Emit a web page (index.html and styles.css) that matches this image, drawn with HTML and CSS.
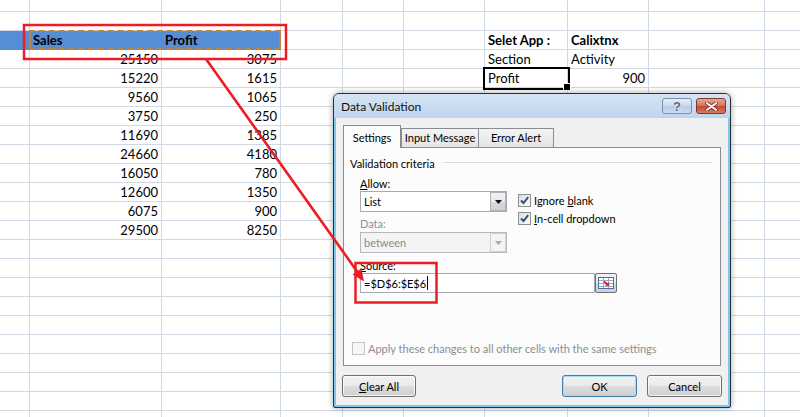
FILE: index.html
```html
<!DOCTYPE html>
<html>
<head>
<meta charset="utf-8">
<title>Data Validation</title>
<link rel="stylesheet" href="styles.css">
</head>
<body>
<div class="grid">
  <div></div><div></div><div></div><div></div><div></div><div></div><div></div><div></div><div></div><div></div>
  <div></div><div></div><div></div><div></div><div></div><div></div><div></div><div></div><div></div><div></div>
  <div class="hd"></div><div class="hd">Sales</div><div class="hd">Profit</div><div></div><div></div><div></div><div class="b">Selet App :</div><div class="b">Calixtnx</div><div></div><div></div>
  <div></div><div class="n">25150</div><div class="n">3075</div><div></div><div></div><div></div><div>Section</div><div>Activity</div><div></div><div></div>
  <div></div><div class="n">15220</div><div class="n">1615</div><div></div><div></div><div></div><div class="sel">Profit</div><div class="n">900</div><div></div><div></div>
  <div></div><div class="n">9560</div><div class="n">1065</div><div></div><div></div><div></div><div></div><div></div><div></div><div></div>
  <div></div><div class="n">3750</div><div class="n">250</div><div></div><div></div><div></div><div></div><div></div><div></div><div></div>
  <div></div><div class="n">11690</div><div class="n">1385</div><div></div><div></div><div></div><div></div><div></div><div></div><div></div>
  <div></div><div class="n">24660</div><div class="n">4180</div><div></div><div></div><div></div><div></div><div></div><div></div><div></div>
  <div></div><div class="n">16050</div><div class="n">780</div><div></div><div></div><div></div><div></div><div></div><div></div><div></div>
  <div></div><div class="n">12600</div><div class="n">1350</div><div></div><div></div><div></div><div></div><div></div><div></div><div></div>
  <div></div><div class="n">6075</div><div class="n">900</div><div></div><div></div><div></div><div></div><div></div><div></div><div></div>
  <div></div><div class="n">29500</div><div class="n">8250</div><div></div><div></div><div></div><div></div><div></div><div></div><div></div>
  <div></div><div></div><div></div><div></div><div></div><div></div><div></div><div></div><div></div><div></div>
  <div></div><div></div><div></div><div></div><div></div><div></div><div></div><div></div><div></div><div></div>
  <div></div><div></div><div></div><div></div><div></div><div></div><div></div><div></div><div></div><div></div>
  <div></div><div></div><div></div><div></div><div></div><div></div><div></div><div></div><div></div><div></div>
  <div></div><div></div><div></div><div></div><div></div><div></div><div></div><div></div><div></div><div></div>
  <div></div><div></div><div></div><div></div><div></div><div></div><div></div><div></div><div></div><div></div>
  <div></div><div></div><div></div><div></div><div></div><div></div><div></div><div></div><div></div><div></div>
  <div></div><div></div><div></div><div></div><div></div><div></div><div></div><div></div><div></div><div></div>
  <div></div><div></div><div></div><div></div><div></div><div></div><div></div><div></div><div></div><div></div>
  <div></div><div></div><div></div><div></div><div></div><div></div><div></div><div></div><div></div><div></div>
</div>

<div class="marquee"></div>

<div class="dlg">
  <div class="dlg-title">
    <span class="title-text">Data Validation</span>
    <div class="title-btns">
      <div class="tbtn help">?</div>
      <div class="tbtn close">
        <svg width="13" height="9" viewBox="0 0 13 9"><path d="M2 1.2L11 7.8M11 1.2L2 7.8" stroke="#7a2f22" stroke-width="3.6" stroke-linecap="round"/><path d="M2 1.2L11 7.8M11 1.2L2 7.8" stroke="#fff" stroke-width="2" stroke-linecap="round"/></svg>
      </div>
    </div>
  </div>
  <div class="dlg-body">
    <div class="tabs">
      <div class="tab active">Settings</div>
      <div class="tab t2">Input Message</div>
      <div class="tab t3">Error Alert</div>
    </div>
    <div class="pane">
      <div class="group"><span>Validation criteria</span><div class="group-line"></div></div>
      <div class="crit">
        <div class="lbl"><u>A</u>llow:</div>
        <div class="row">
          <div class="combo">
            <div class="combo-val">List</div>
            <div class="combo-btn"><svg width="7" height="4" viewBox="0 0 7 4"><path d="M0 0H7L3.5 4Z" fill="#111"/></svg></div>
          </div>
          <div class="checks">
            <div class="chk"><div class="box"><svg width="11" height="11" viewBox="0 0 11 11"><path d="M2 5.5L4.5 8L9.2 2.2" stroke="#2f4a86" stroke-width="1.9" fill="none"/></svg></div><span>Ignore <u>b</u>lank</span></div>
            <div class="chk"><div class="box"><svg width="11" height="11" viewBox="0 0 11 11"><path d="M2 5.5L4.5 8L9.2 2.2" stroke="#2f4a86" stroke-width="1.9" fill="none"/></svg></div><span><u>I</u>n-cell dropdown</span></div>
          </div>
        </div>
        <div class="lbl dis">Data:</div>
        <div class="combo disabled">
          <div class="combo-val">between</div>
          <div class="combo-btn"><svg width="7" height="4" viewBox="0 0 7 4"><path d="M0 0H7L3.5 4Z" fill="#a8a8a8"/></svg></div>
        </div>
        <div class="lbl src-lbl"><u>S</u>ource:</div>
        <div class="src">
          <div class="src-val">=$D$6:$E$6<span class="caret"></span></div>
          <div class="ref-btn">
            <svg width="16" height="12" viewBox="0 0 16 12"><rect x="0.5" y="0.5" width="15" height="11" fill="#fff" stroke="#4d6f9e"/><path d="M1 3.5H15M1 6.5H15M1 9.5H15M5.5 1V11M10.5 1V11" stroke="#93aed4"/><path d="M6 4.5L9.5 7.5" stroke="#d8261c" stroke-width="2"/><path d="M11.5 9L7 8.6L10.8 5Z" fill="#d8261c"/></svg>
          </div>
        </div>
      </div>
      <div class="apply"><div class="box off"></div><span>Apply these changes to all other cells with the same settings</span></div>
    </div>
    <div class="btns">
      <div class="btn clear"><span><u>C</u>lear All</span></div>
      <div class="btn ok">OK</div>
      <div class="btn">Cancel</div>
    </div>
  </div>
</div>

<svg class="annot" width="800" height="417" viewBox="0 0 800 417">
  <rect x="24" y="25" width="262" height="34" fill="none" stroke="#ec1c24" stroke-width="2.5"/>
  <rect x="355.5" y="263" width="81" height="39.5" fill="none" stroke="#ec1c24" stroke-width="2.5"/>
  <path d="M206 59L357.5 272" stroke="#ec1c24" stroke-width="2.6"/>
  <path d="M364 281.5L352.6 274.6L361.4 268.4Z" fill="#ec1c24"/>
</svg>
</body>
</html>
```

FILE: styles.css
```css
* { box-sizing: border-box; }
html, body { margin: 0; padding: 0; }
body {
  width: 800px;
  height: 417px;
  overflow: hidden;
  position: relative;
  background: #fff;
  font-family: Lato, "Liberation Sans", sans-serif;
  font-size: 13px;
  color: #000;
}

/* spreadsheet */
.grid {
  display: grid;
  grid-template-columns: 30px 132px 119px 62px 61px 81px 83px 81px 116px 36px;
  grid-template-rows: 12px;
  grid-auto-rows: 19px;
}
.grid > div {
  border-right: 1px solid #d0d7e5;
  border-bottom: 1px solid #d0d7e5;
  line-height: 18px;
  padding: 0 3px;
  white-space: nowrap;
  overflow: hidden;
}
.grid > .n { text-align: right; }
.grid > .b { font-weight: bold; }
.grid > .hd {
  background: #558ed5;
  border-color: #558ed5;
  font-weight: bold;
}
.grid > .sel {
  outline: 2px solid #000;
  position: relative;
  overflow: visible;
}
.sel::after {
  content: "";
  position: absolute;
  right: -4px;
  bottom: -4px;
  width: 6px;
  height: 6px;
  background: #000;
  border: 1px solid #fff;
}
.marquee {
  position: absolute;
  left: 29px;
  top: 30px;
  width: 252px;
  height: 20px;
  border: 2px dashed #c9812f;
}

/* dialog */
.dlg {
  position: absolute;
  left: 333px;
  top: 93px;
  width: 398px;
  height: 315px;
  border: 1px solid #2b3138;
  border-radius: 6px 6px 2px 2px;
  background: #79c9ee;
  padding: 0 2px 2px;
  display: flex;
  flex-direction: column;
  font-family: Lato, "Liberation Sans", sans-serif;
  font-size: 11px;
  color: #000;
  box-shadow: 0 0 6px rgba(0, 0, 0, 0.35);
}
.dlg-title {
  height: 24px;
  margin: 0 -2px;
  padding: 0 4px 0 7px;
  display: flex;
  align-items: center;
  background: linear-gradient(#d6e4f4, #bfd4ec);
  border-radius: 5px 5px 0 0;
}
.title-text { font-size: 12px; color: #111; }
.title-btns {
  margin-left: auto;
  align-self: flex-start;
  margin-top: 4px;
  display: flex;
  gap: 4px;
}
.tbtn {
  width: 30px;
  height: 16px;
  border-radius: 3px;
  display: flex;
  align-items: center;
  justify-content: center;
}
.help {
  border: 1px solid #7891b3;
  background: linear-gradient(#e6eef8, #c9d9ee 50%, #b5cbe6 50%, #cbdcf0);
  font-family: "Liberation Sans", sans-serif;
  font-size: 13px;
  font-weight: bold;
  color: #5d6877;
  text-shadow: 0 0 2px #fff;
}
.close {
  border: 1px solid #7b382c;
  background: linear-gradient(#e9a595, #d4735f 50%, #c3462f 50%, #d57c62);
}
.dlg-body {
  flex: 1;
  background: #f0f0f0;
  padding: 7px 6px 8px 7px;
  display: flex;
  flex-direction: column;
}

/* tabs */
.tabs {
  display: flex;
  align-items: flex-end;
  height: 22px;
}
.tab {
  height: 19px;
  border: 1px solid #898c95;
  border-bottom: none;
  background: linear-gradient(#f4f4f4, #e4e4e4);
  text-align: center;
  line-height: 17px;
  white-space: nowrap;
}
.tab.active {
  width: 58px;
  height: 23px;
  margin-bottom: -1px;
  padding-top: 3px;
  background: #fcfcfc;
  position: relative;
  z-index: 1;
}
.tab.t2 { width: 78px; }
.tab.t3 { width: 76px; margin-left: -1px; }

.pane {
  height: 219px;
  margin-right: 1px;
  border: 1px solid #898c95;
  background: #fcfcfc;
  display: flex;
  flex-direction: column;
}
.group {
  display: flex;
  align-items: center;
  height: 16px;
  margin: 7px 7px 0 6px;
}
.group-line {
  flex: 1;
  height: 2px;
  margin-left: 8px;
  border-top: 1px solid #d5dfe5;
  border-bottom: 1px solid #fff;
}
.crit {
  padding-left: 16px;
  display: flex;
  flex-direction: column;
}
.lbl { height: 15px; line-height: 15px; margin-top: 5px; }
.lbl.dis { color: #8d8d8d; margin-top: 4px; }
.lbl.src-lbl { margin-top: 5px; }
.row { display: flex; gap: 11px; height: 21px; }
.combo {
  width: 147px;
  height: 21px;
  border: 1px solid #a5acb5;
  background: #fff;
  display: flex;
}
.combo-val { flex: 1; padding-left: 3px; line-height: 19px; }
.combo-btn {
  width: 16px;
  border: 1px solid #aeb3b9;
  background: linear-gradient(#f3f3f3, #e8e8e8 50%, #dadada 50%, #d2d2d2);
  display: flex;
  align-items: center;
  justify-content: center;
}
.combo.disabled { background: #f4f4f4; border-color: #b5b8bd; margin-top: 1px; }
.combo.disabled .combo-val { color: #8a8a8a; }
.combo.disabled .combo-btn { background: #f4f4f4; border-color: #cfd2d5; }

.checks {
  display: flex;
  flex-direction: column;
  gap: 5px;
  margin-top: 3px;
}
.chk { display: flex; align-items: center; gap: 3px; height: 13px; white-space: nowrap; }
.box {
  width: 13px;
  height: 13px;
  flex: none;
  border: 1px solid #8e8f8f;
  background: linear-gradient(135deg, #dcdcdc, #fbfbfb);
  display: flex;
  align-items: center;
  justify-content: center;
}
.box.off { border-color: #c4c4c4; background: #f6f6f6; }

.src {
  width: 257px;
  height: 20px;
  display: flex;
}
.src-val {
  flex: 1;
  border: 1px solid #a5acb5;
  background: #fff;
  padding-left: 3px;
  display: flex;
  align-items: center;
}
.caret {
  display: inline-block;
  width: 1px;
  height: 14px;
  margin-left: 1px;
  background: #000;
}
.ref-btn {
  width: 22px;
  border: 1px solid #707070;
  border-radius: 2px;
  background: linear-gradient(#f2f2f2, #ebebeb 50%, #dddddd 50%, #cfcfcf);
  display: flex;
  align-items: center;
  justify-content: center;
}
.apply {
  margin: auto 0 10px 8px;
  display: flex;
  align-items: center;
  gap: 3px;
  color: #8d8d8d;
  white-space: nowrap;
}

/* buttons */
.btns {
  display: flex;
  margin-top: 9px;
  gap: 10px;
}
.btn {
  width: 75px;
  height: 22px;
  border: 1px solid #707070;
  border-radius: 3px;
  background: linear-gradient(#f2f2f2, #ebebeb 48%, #dddddd 52%, #cfcfcf);
  box-shadow: inset 0 0 0 1px rgba(255, 255, 255, 0.7);
  display: flex;
  align-items: center;
  justify-content: center;
}
.btn.clear { width: 74px; margin-left: -1px; }
.btn.ok {
  margin-left: auto;
  border-color: #3c7fb1;
  box-shadow: inset 0 0 0 1px #9fdcf8;
}

.annot {
  position: absolute;
  left: 0;
  top: 0;
  pointer-events: none;
}
```
